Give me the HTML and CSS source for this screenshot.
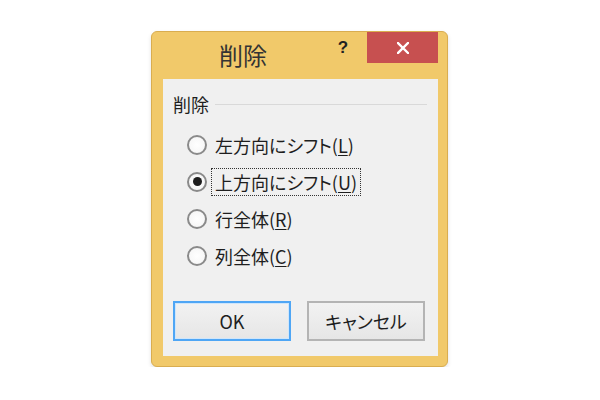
FILE: index.html
```html
<!DOCTYPE html>
<html lang="ja">
<head>
    <meta charset="UTF-8">
    <title>削除</title>
    <link rel="stylesheet" href="styles.css">
</head>
<body>
    <div class="dialog">
        <div class="titlebar">
            <span class="title">削除</span>
            <span class="help">?</span>
            <button class="close" aria-label="閉じる">
                <svg width="12" height="12" viewBox="0 0 12 12">
                    <path d="M1 1 L11 11 M11 1 L1 11" stroke="#fff" stroke-width="2.4" stroke-linecap="square"/>
                </svg>
            </button>
        </div>
        <div class="client">
            <div class="group-header">
                <span>削除</span>
                <span class="group-line"></span>
            </div>
            <div class="options">
                <label class="option"><span class="radio"></span><span class="label">左方向にシフト(<u>L</u>)</span></label>
                <label class="option"><span class="radio checked"></span><span class="label focused">上方向にシフト(<u>U</u>)</span></label>
                <label class="option"><span class="radio"></span><span class="label">行全体(<u>R</u>)</span></label>
                <label class="option"><span class="radio"></span><span class="label">列全体(<u>C</u>)</span></label>
            </div>
            <div class="button-row">
                <button class="btn default">OK</button>
                <button class="btn">キャンセル</button>
            </div>
        </div>
    </div>
</body>
</html>
```

FILE: styles.css
```css
body {
    margin: 0;
    background-color: #fff;
    font-family: "Noto Sans CJK JP", "Noto Sans", sans-serif;
    font-feature-settings: "palt";
    color: #1e1e1e;
}
.dialog {
    box-sizing: border-box;
    width: 297px;
    height: 336px;
    margin: 31px 0 0 151px;
    background-color: #f1c96a;
    border: 1px solid #d9ad50;
    border-radius: 6px;
    box-shadow: 0 2px 4px rgba(0, 0, 0, 0.12);
    padding: 0 9px 10px 11px;
    display: flex;
    flex-direction: column;
}
.titlebar {
    height: 47px;
    display: flex;
    align-items: flex-start;
    flex-shrink: 0;
}
.title {
    margin: 7px 0 0 56px;
    font-size: 24px;
    line-height: 32px;
    color: #333;
}
.help {
    margin-left: auto;
    width: 24px;
    line-height: 32px;
    text-align: center;
    font-family: "Liberation Sans", Arial, sans-serif;
    font-weight: bold;
    font-size: 17px;
    color: #222;
    margin-right: 12px;
}
.close {
    width: 71px;
    height: 31px;
    border: none;
    padding: 0;
    background-color: #c75050;
    display: flex;
    align-items: center;
    justify-content: center;
}
.client {
    flex: 1;
    background-color: #f0f0f0;
    display: flex;
    flex-direction: column;
    padding: 14px 11px 15px 10px;
}
.group-header {
    display: flex;
    align-items: center;
    height: 22px;
    font-size: 18px;
}
.group-line {
    flex: 1;
    height: 1px;
    margin-left: 6px;
    background-color: #d9d9d9;
}
.options {
    margin-top: 11px;
    padding-left: 14px;
}
.option {
    display: flex;
    align-items: center;
    height: 37px;
    font-size: 18px;
}
.radio {
    box-sizing: border-box;
    width: 20px;
    height: 20px;
    border: 2px solid #8a8a8a;
    border-radius: 50%;
    background: radial-gradient(circle, #fff 0%, #f4f4f4 100%);
    margin-right: 4px;
    display: flex;
    align-items: center;
    justify-content: center;
}
.radio.checked::after {
    content: "";
    width: 9px;
    height: 9px;
    border-radius: 50%;
    background-color: #1e1e1e;
}
.label {
    padding: 0 3px;
    line-height: 26px;
    border: 1px dotted transparent;
}
.label.focused {
    border-color: #333;
}
.label u {
    text-underline-offset: 2px;
}
.button-row {
    margin-top: auto;
    display: flex;
    gap: 16px;
}
.btn {
    box-sizing: border-box;
    width: 118px;
    height: 40px;
    font-family: inherit;
    font-feature-settings: "palt";
    font-size: 18px;
    color: #1e1e1e;
    background: linear-gradient(#f2f2f2, #e6e6e6);
    border: 2px solid #b4b4b4;
    border-radius: 0;
    padding: 0;
}
.btn.default {
    border-color: #4fa6f5;
    box-shadow: inset 0 0 0 1px #cfe6fb;
}
```
